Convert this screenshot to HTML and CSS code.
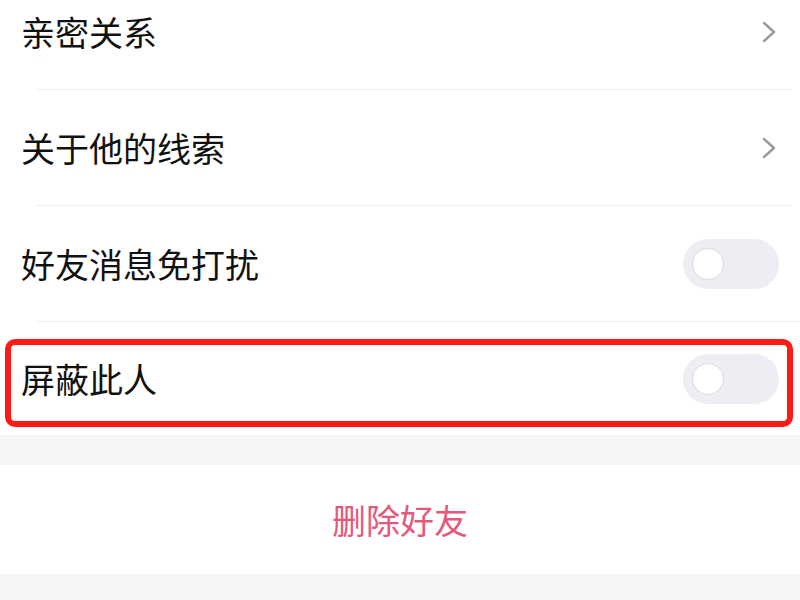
FILE: index.html
```html
<!DOCTYPE html>
<html lang="zh-CN">
  <head>
    <meta charset="UTF-8" />
    <meta name="viewport" content="width=device-width, initial-scale=1.0" />
    <title>好友设置</title>
    <link rel="stylesheet" href="styles.css">
  </head>
  <body>
    <div class="list">
      <div class="row">
        <span class="label">亲密关系</span>
        <svg class="arrow" width="14" height="22" viewBox="0 0 14 22">
          <path d="M2 2 L12 11 L2 20" fill="none" stroke="#9a9a9a" stroke-width="2.4" stroke-linecap="round" stroke-linejoin="round" />
        </svg>
      </div>
      <div class="row">
        <span class="label">关于他的线索</span>
        <svg class="arrow" width="14" height="22" viewBox="0 0 14 22">
          <path d="M2 2 L12 11 L2 20" fill="none" stroke="#9a9a9a" stroke-width="2.4" stroke-linecap="round" stroke-linejoin="round" />
        </svg>
      </div>
      <div class="row full">
        <span class="label">好友消息免打扰</span>
        <div class="switch"><div class="knob"></div></div>
      </div>
      <div class="row last marked">
        <span class="label">屏蔽此人</span>
        <div class="switch"><div class="knob"></div></div>
      </div>
    </div>
    <div class="gap"></div>
    <div class="danger">删除好友</div>
    <div class="gap"></div>
  </body>
</html>
```

FILE: styles.css
```css
* {
  box-sizing: border-box;
}
body {
  margin: 0;
  background: #fff;
  font-family: "Noto Sans CJK SC", "Noto Sans", sans-serif;
  color: #111;
  overflow: hidden;
}
.list {
  margin-top: -26px;
}
.row {
  position: relative;
  height: 116px;
  display: flex;
  align-items: center;
  justify-content: space-between;
  padding: 0 24px 0 21px;
}
.row::before {
  content: "";
  position: absolute;
  left: 36px;
  right: 8px;
  bottom: 0;
  border-bottom: 1px solid #efefef;
}
.row.full {
  padding-right: 21px;
}
.row.full::before {
  right: 0;
}
.row.last {
  height: 113px;
  padding-right: 21px;
}
.row.last::before {
  display: none;
}
.label {
  font-size: 34px;
  line-height: 1;
}
.arrow {
  display: block;
}
.switch {
  width: 96px;
  height: 50px;
  border-radius: 25px;
  background: #ededf3;
  display: flex;
  align-items: center;
  padding-left: 9px;
}
.knob {
  width: 32px;
  height: 32px;
  border-radius: 50%;
  background: #fff;
  border: 1px solid #d9d9e2;
}
/* annotation box */
.marked::after {
  content: "";
  position: absolute;
  left: 5px;
  right: 7px;
  top: 17px;
  bottom: 8px;
  border: 6px solid #fb1a14;
  border-radius: 10px;
}
.gap {
  height: 30px;
  background: #f6f6f9;
}
.danger {
  height: 109px;
  display: flex;
  align-items: center;
  justify-content: center;
  font-size: 34px;
  color: #e4587c;
  background: #fff;
}
```
